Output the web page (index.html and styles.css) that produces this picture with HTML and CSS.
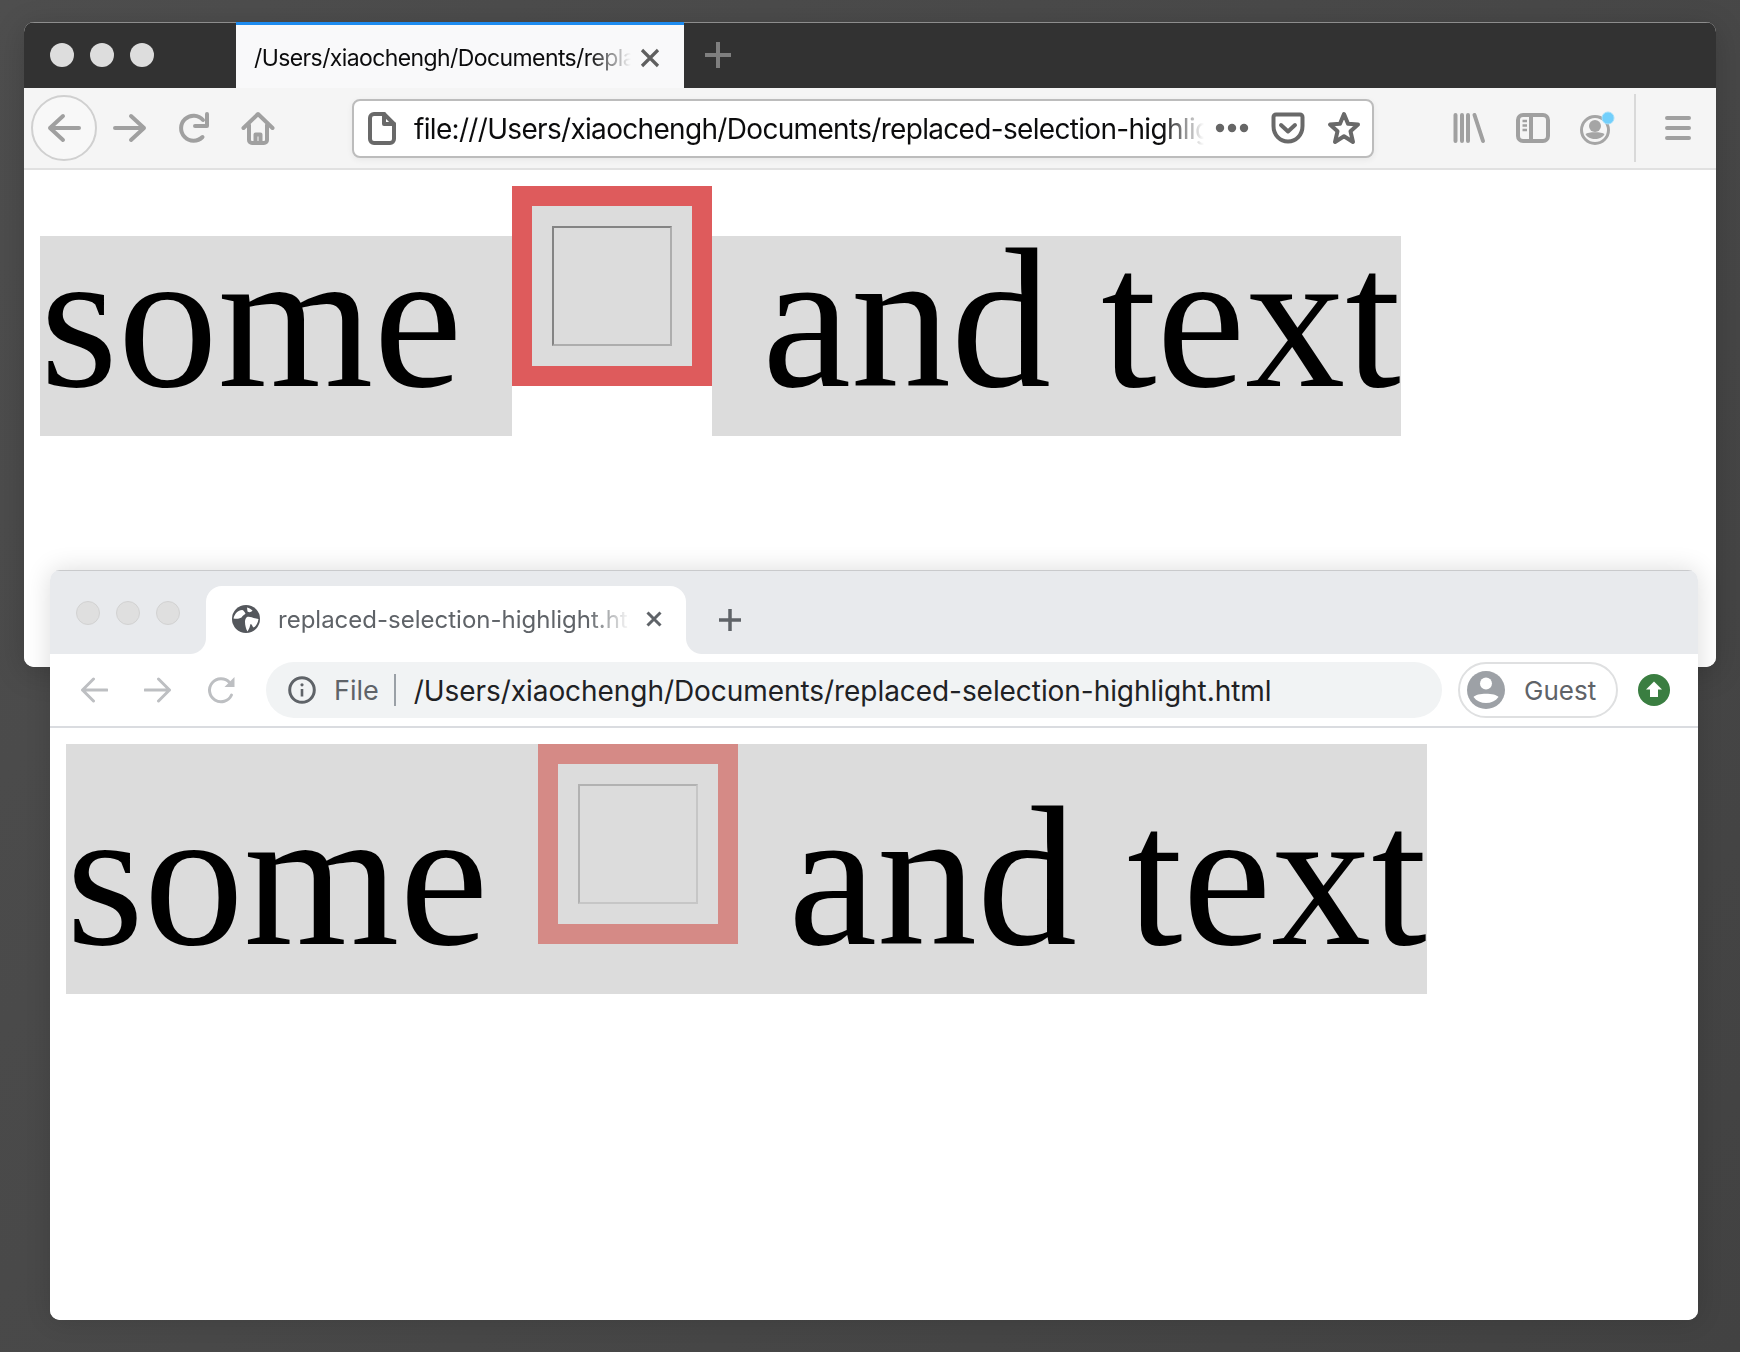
FILE: index.html
```html
<!DOCTYPE html>
<html lang="en">
<head>
<meta charset="utf-8">
<title>replaced-selection-highlight</title>
<link rel="stylesheet" href="styles.css">
</head>
<body>
<div class="desktop">

  <section class="window ff">
    <header class="ff-titlebar">
      <div class="lights ff-lights"><i></i><i></i><i></i></div>
      <div class="ff-tab">
        <span class="ff-tab-text fade">/Users/xiaochengh/Documents/replaced-selection-highlight.html</span>
        <svg class="ff-tab-x" width="20" height="20" viewBox="0 0 20 20"><path d="M2 2L18 18M18 2L2 18"/></svg>
      </div>
      <svg class="ff-plus" width="28" height="28" viewBox="0 0 28 28"><path d="M14 1V27M1 14H27"/></svg>
    </header>
    <nav class="ff-toolbar">
      <div class="ff-btn ff-back">
        <svg width="34" height="30" viewBox="0 0 34 30"><path class="ff-ic" d="M32 15H3M16 3L3 15L16 27"/></svg>
      </div>
      <div class="ff-btn ff-fwd">
        <svg width="34" height="30" viewBox="0 0 34 30"><path class="ff-ic" d="M2 15H31M18 3L31 15L18 27"/></svg>
      </div>
      <div class="ff-btn">
        <svg width="34" height="34" viewBox="0 0 34 34"><path class="ff-ic" d="M25.500 26A12.500 12.500 0 1 1 26 9M30 3V15H18"/></svg>
      </div>
      <div class="ff-btn">
        <svg width="34" height="34" viewBox="0 0 34 34"><path class="ff-ic" d="M2.500 17L17 3L31.500 17M8 14V29a3 3 0 0 0 3 3H23a3 3 0 0 0 3-3V14M14.500 32V23.500H19.500V32"/></svg>
      </div>
      <div class="ff-url">
        <svg class="ff-page" width="28" height="33" viewBox="0 0 28 33"><path class="ff-dark" d="M6 2H16L26 12V27a4 4 0 0 1-4 4H6a4 4 0 0 1-4-4V6a4 4 0 0 1 4-4Z"/><path class="ff-dark" d="M16 2V12H26"/></svg>
        <span class="ff-url-text fade">file:///Users/xiaochengh/Documents/replaced-selection-highlight.html</span>
        <div class="ff-url-btn">
          <svg width="34" height="10" viewBox="0 0 34 10"><circle cx="5" cy="5" r="4.200"/><circle cx="17" cy="5" r="4.200"/><circle cx="29" cy="5" r="4.200"/></svg>
        </div>
        <div class="ff-url-btn">
          <svg width="34" height="32" viewBox="0 0 34 32"><path class="ff-dark" d="M2.500 5a2.500 2.500 0 0 1 2.500-2.500H29a2.500 2.500 0 0 1 2.500 2.500V14C31.500 23 25 29.500 17 29.500S2.500 23 2.500 14Z"/><path class="ff-dark" d="M10 13L17 19.500L24 13"/></svg>
        </div>
        <div class="ff-url-btn">
          <svg width="34" height="34" viewBox="0 0 34 34"><path class="ff-dark" d="M17 3L21 12.800L31 13.500L23.500 20.300L26 31L17 25.300L8 31L10.500 20.300L3 13.500L13 12.800Z"/></svg>
        </div>
      </div>
      <div class="ff-btn">
        <svg width="34" height="32" viewBox="0 0 34 32"><path class="ff-ic" d="M3.500 3V29M10 3V29M16 3V29M22.500 3L31 29"/></svg>
      </div>
      <div class="ff-btn">
        <svg width="34" height="30" viewBox="0 0 34 30"><rect class="ff-ic" x="2" y="2" width="30" height="26" rx="5"/><path class="ff-ic" d="M15 2V28"/><path class="ff-thin" d="M6.500 8H11M6.500 12.500H11M6.500 17H11"/></svg>
      </div>
      <div class="ff-btn ff-account">
        <svg width="36" height="36" viewBox="0 0 36 36"><circle cx="16" cy="20" r="13.500" class="ff-thick"/><circle cx="16" cy="16" r="6" class="ff-fill"/><path class="ff-fill" d="M6.500 24C9 21.500 23 21.500 25.500 24C24 27.500 20 29 16 29S8 27.500 6.500 24Z"/><circle class="ff-dot" cx="29" cy="8" r="6"/></svg>
      </div>
      <div class="ff-sep"></div>
      <div class="ff-btn ff-menu">
        <svg width="26" height="26" viewBox="0 0 26 26"><path class="ff-ic" d="M2 3H24M2 13H24M2 23H24"/></svg>
      </div>
    </nav>
    <main class="page ff-page-body">
      <div class="line">
        <span class="word ff-word">some </span>
        <div class="replaced ff-replaced"><div class="inner"><div class="image ff-image"></div></div></div>
        <span class="word ff-word"> and text</span>
      </div>
    </main>
  </section>

  <section class="window cr">
    <header class="cr-titlebar">
      <div class="lights cr-lights"><i></i><i></i><i></i></div>
      <div class="cr-tab">
        <svg class="cr-globe" width="28" height="28" viewBox="0 0 28 28"><circle cx="14" cy="14" r="14" fill="#54575c"/><path fill="#fff" d="M1.500 13.500C2.500 9 6 5 10 5C11.500 5 12.500 7 13.500 8.500C12.500 10 10.500 10.500 9.500 12.500C7 14 4 14 1.500 13.500ZM15 12C18 11 20 13 26.500 14C26 18 24 21.500 21.500 22.500C20 21 20.500 19.500 18.500 19C18 21 17.500 23.500 15.500 26.500C14 24 13 20 13 17C13 15 13.500 13 15 12ZM15 2.500C17 3 19.500 4.500 20.500 5.500C19 7.500 17 7.500 15.500 6.500Z"/></svg>
        <span class="cr-tab-text fade">replaced-selection-highlight.html</span>
        <svg class="cr-tab-x" width="16" height="16" viewBox="0 0 16 16"><path d="M1.500 1.500L14.500 14.500M14.500 1.500L1.500 14.500"/></svg>
      </div>
      <svg class="cr-plus" width="24" height="24" viewBox="0 0 24 24"><path d="M12 1V23M1 12H23"/></svg>
    </header>
    <nav class="cr-toolbar">
      <div class="cr-btn">
        <svg width="28" height="26" viewBox="0 0 28 26"><path class="cr-ic" d="M27 13H2.500M13.500 2L2.500 13L13.500 24"/></svg>
      </div>
      <div class="cr-btn">
        <svg width="28" height="26" viewBox="0 0 28 26"><path class="cr-ic" d="M1 13H25.500M14.500 2L25.500 13L14.500 24"/></svg>
      </div>
      <div class="cr-btn">
        <svg width="30" height="30" viewBox="0 0 30 30"><path class="cr-ic" d="M24.500 20A11.500 11.500 0 1 1 22.500 7.500L25 10"/><path class="cr-tri" d="M27.500 2V12H17.500Z"/></svg>
      </div>
      <div class="cr-omni">
        <svg class="cr-info" width="28" height="28" viewBox="0 0 28 28"><circle class="cr-info-ring" cx="14" cy="14" r="12.300"/><path class="cr-info-i" d="M14 13V20.500"/><circle class="cr-info-d" cx="14" cy="8.800" r="1.600"/></svg>
        <span class="cr-file">File</span>
        <span class="cr-div"></span>
        <span class="cr-url">/Users/xiaochengh/Documents/replaced-selection-highlight.html</span>
      </div>
      <div class="cr-guest">
        <svg width="38" height="38" viewBox="0 0 38 38"><circle cx="19" cy="19" r="19" fill="#9da1a6"/><circle cx="19" cy="12.500" r="6" fill="#fff"/><path fill="#fff" d="M6.500 26C9.500 21.500 28.500 21.500 31.500 26C28.500 30 24 32 19 32S9.500 30 6.500 26Z"/></svg>
        <span class="cr-guest-text">Guest</span>
      </div>
      <svg class="cr-update" width="32" height="32" viewBox="0 0 32 32"><circle cx="16" cy="16" r="16" fill="#3a7e41"/><path fill="#fff" d="M16 7.500L24 15.500H20V23H12V15.500H8Z"/></svg>
    </nav>
    <main class="page cr-page-body">
      <div class="line cr-line">
        <span class="word cr-word">some </span>
        <div class="replaced cr-replaced"><div class="inner"><div class="image cr-image"></div></div></div>
        <span class="word cr-word"> and text</span>
      </div>
    </main>
  </section>

</div>
</body>
</html>
```

FILE: styles.css
```css
* { box-sizing: border-box; }
html, body { margin: 0; padding: 0; }
body { font-family: Inter, "Liberation Sans", sans-serif; }

.desktop {
  position: relative;
  width: 1740px;
  height: 1352px;
  overflow: hidden;
  background: linear-gradient(135deg, #4e4e4e 0%, #484848 50%, #424242 100%);
}

.window {
  position: absolute;
  display: flex;
  flex-direction: column;
  overflow: hidden;
  background: #fff;
  border-radius: 10px;
}
.ff {
  left: 24px;
  top: 22px;
  width: 1692px;
  height: 645px;
  box-shadow: 0 6px 30px rgba(0, 0, 0, .18);
}
.cr {
  left: 50px;
  top: 570px;
  width: 1648px;
  height: 750px;
  box-shadow: 0 0 26px rgba(0, 0, 0, .14);
}

.lights { display: flex; }
.lights i { display: block; width: 24px; height: 24px; border-radius: 50%; }
.fade {
  white-space: nowrap;
  overflow: hidden;
  -webkit-mask-image: linear-gradient(to right, #000 calc(100% - 42px), transparent 100%);
  mask-image: linear-gradient(to right, #000 calc(100% - 42px), transparent 100%);
}

/* Firefox window */
.ff-titlebar {
  display: flex;
  align-items: stretch;
  flex: none;
  height: 66px;
  background: #323232;
  box-shadow: inset 0 1px 0 #8d8d8d;
}
.ff-lights { gap: 16px; width: 212px; padding: 21px 0 0 26px; }
.ff-lights i { background: #dddddd; }
.ff-tab {
  display: flex;
  align-items: center;
  width: 448px;
  padding: 2px 0 0 18px;
  background: #f9f9fa;
  border-top: 3px solid #1e8cf0;
}
.ff-tab-text { width: 377px; font-size: 23px; color: #0c0c0d; letter-spacing: -.6px; }
.ff-tab-x { margin-left: 9px; }
.ff-tab-x path { fill: none; stroke: #5f5f5f; stroke-width: 3.200; }
.ff-plus { align-self: center; margin: 0 0 0 20px; }
.ff-plus path { fill: none; stroke: #7f7f7f; stroke-width: 4; }

.ff-toolbar {
  display: flex;
  align-items: center;
  flex: none;
  height: 82px;
  padding: 0 6px 0 7px;
  background: #f5f5f5;
  border-bottom: 2px solid #e1e1e1;
}
.ff-btn {
  display: flex;
  align-items: center;
  justify-content: center;
  flex: none;
  width: 64px;
  height: 64px;
}
.ff-back {
  width: 66px;
  height: 66px;
  background: #f8f8f8;
  border: 2px solid #d0d0d0;
  border-radius: 50%;
}
.ff-fwd { margin-left: 1px; }
.ff-ic { fill: none; stroke: #a0a0a0; stroke-width: 4; stroke-linecap: round; stroke-linejoin: round; }
.ff-thin { fill: none; stroke: #a0a0a0; stroke-width: 2.500; }
.ff-thick { fill: none; stroke: #a5a5a5; stroke-width: 3; }
.ff-fill { fill: #a5a5a5; }
.ff-dot { fill: #72cffb; stroke: #a5e0fb; stroke-width: 1; }
.ff-dark { fill: none; stroke: #696969; stroke-width: 4; stroke-linecap: round; stroke-linejoin: round; }

.ff-url {
  display: flex;
  align-items: center;
  flex: 1;
  min-width: 0;
  height: 59px;
  margin: 0 63px 0 62px;
  padding-left: 14px;
  background: #fff;
  border: 2px solid #bcbcbc;
  border-radius: 8px;
  box-shadow: 0 2px 6px rgba(0, 0, 0, .06);
}
.ff-page { flex: none; }
.ff-url-text { flex: 1; min-width: 0; margin-left: 18px; padding-top: 2px; font-size: 28px; letter-spacing: -.68px; color: #0c0c0d; }
.ff-url-btn { display: flex; align-items: center; justify-content: center; flex: none; width: 56px; }
.ff-url-btn circle { fill: #666; }

.ff-sep { flex: none; width: 2px; height: 68px; margin: 0 10px 0 5px; background: #d9d9d9; }

/* Chrome window */
.cr-titlebar {
  display: flex;
  align-items: flex-end;
  flex: none;
  height: 84px;
  background: #e8eaed;
  box-shadow: inset 0 1px 0 #c9cacc;
}
.cr-lights { align-self: flex-start; gap: 16px; width: 156px; padding: 31px 0 0 26px; }
.cr-lights i { background: #dfdfdf; border: 1px solid #d2d2d2; }
.cr-tab {
  position: relative;
  display: flex;
  align-items: center;
  width: 480px;
  height: 68px;
  padding: 0 0 2px 26px;
  background: #fff;
  border-radius: 16px 16px 0 0;
}
.cr-tab::before,
.cr-tab::after {
  content: "";
  position: absolute;
  bottom: 0;
  width: 16px;
  height: 16px;
}
.cr-tab::before { left: -16px; background: radial-gradient(circle at 0 0, #e8eaed 15.500px, #fff 16.500px); }
.cr-tab::after { right: -16px; background: radial-gradient(circle at 100% 0, #e8eaed 15.500px, #fff 16.500px); }
.cr-globe { flex: none; }
.cr-tab-text { width: 352px; margin-left: 18px; font-size: 24px; color: #5f6368; }
.cr-tab-x { flex: none; margin-left: 16px; }
.cr-tab-x path { fill: none; stroke: #5f6368; stroke-width: 3; }
.cr-plus { align-self: center; margin: 16px 0 0 32px; }
.cr-plus path { fill: none; stroke: #5f6368; stroke-width: 3.500; }

.cr-toolbar {
  display: flex;
  align-items: center;
  flex: none;
  height: 74px;
  padding-left: 12px;
  background: #fff;
  border-bottom: 2px solid #dadce0;
}
.cr-btn { display: flex; align-items: center; justify-content: center; flex: none; width: 64px; height: 56px; }
.cr-ic { fill: none; stroke: #bdbfc2; stroke-width: 3; stroke-linecap: round; stroke-linejoin: round; }
.cr-tri { fill: #bdbfc2; }
.cr-omni {
  display: flex;
  align-items: center;
  flex: none;
  width: 1176px;
  height: 56px;
  margin-left: 12px;
  padding-left: 22px;
  background: #f1f3f4;
  border-radius: 28px;
}
.cr-info { flex: none; }
.cr-info-ring { fill: none; stroke: #5f6368; stroke-width: 3; }
.cr-info-i { fill: none; stroke: #5f6368; stroke-width: 2.600; }
.cr-info-d { fill: #5f6368; }
.cr-file { margin-left: 18px; font-size: 27px; color: #5f6368; }
.cr-div { flex: none; width: 2px; height: 32px; margin-left: 15px; background: #9aa0a6; }
.cr-url { margin-left: 18px; padding-top: 1px; font-size: 28px; letter-spacing: -.06px; color: #202124; white-space: nowrap; }
.cr-guest {
  display: flex;
  align-items: center;
  flex: none;
  width: 160px;
  height: 56px;
  margin-left: 16px;
  padding-left: 7px;
  border: 2px solid #dfe0e1;
  border-radius: 28px;
}
.cr-guest-text { margin-left: 19px; font-size: 26px; color: #5f6368; }
.cr-update { flex: none; margin-left: 20px; }

/* Page content */
.page { flex: 1; padding: 16px; background: #fff; }
.line {
  display: flex;
  align-items: flex-start;
  font-family: "Liberation Serif", serif;
  font-size: 200px;
  color: #000;
  white-space: pre;
}
.word { flex: none; background: #dcdcdc; }
.ff-word { height: 200px; margin-top: 50px; line-height: 165px; }
.cr-line { width: fit-content; background: #dcdcdc; }
.cr-word { height: 250px; line-height: 265px; }
.replaced { flex: none; width: 200px; height: 200px; padding: 20px; }
.ff-replaced { background: #de5b5c; }
.cr-replaced { background: #d58a86; }
.inner { width: 160px; height: 160px; padding: 20px; background: #dcdcdc; }
.image { width: 120px; height: 120px; border-style: solid; border-width: 2px; }
.ff-image { border-color: #848484 #adadad #adadad #848484; }
.cr-image { border-color: #b2b2b2 #c6c6c6 #c6c6c6 #b2b2b2; }
```
